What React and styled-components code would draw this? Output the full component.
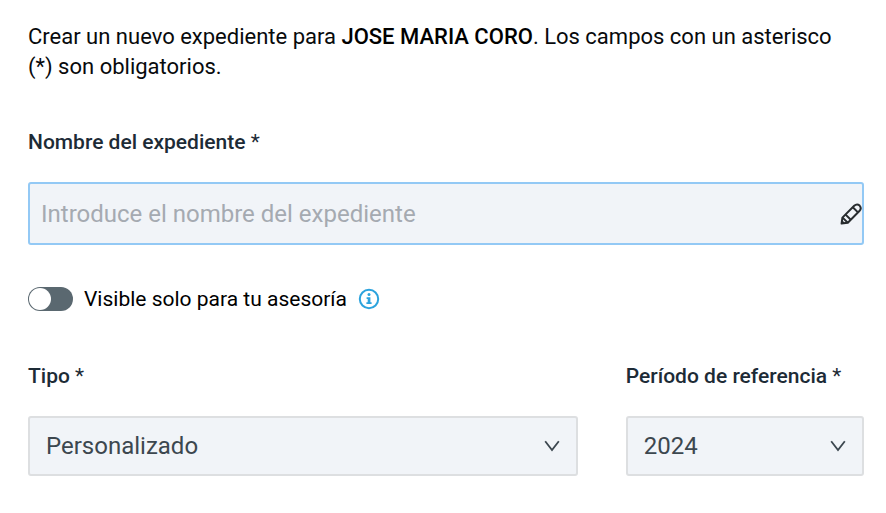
import React, { useState } from "react";
import styled, { createGlobalStyle } from "styled-components";

const App = () => {
  const [name, setName] = useState("");
  const [isPrivate, setIsPrivate] = useState(false);
  const [type, setType] = useState("Personalizado");
  const [period, setPeriod] = useState("2024");

  return (
    <>
      <GlobalStyle />
      <Form onSubmit={(e) => e.preventDefault()}>
        <Intro>
          Crear un nuevo expediente para <strong>JOSE MARIA CORO</strong>. Los
          campos con un asterisco (*) son obligatorios.
        </Intro>
        <Field>
          <Label htmlFor="name">
            Nombre del expediente <span>*</span>
          </Label>
          <InputBox>
            <input
              type="text"
              id="name"
              name="name"
              placeholder="Introduce el nombre del expediente"
              value={name}
              onChange={(e) => setName(e.target.value)}
            />
            <PencilIcon />
          </InputBox>
        </Field>
        <ToggleRow>
          <Toggle
            type="checkbox"
            role="switch"
            id="private"
            name="private"
            checked={isPrivate}
            onChange={(e) => setIsPrivate(e.target.checked)}
          />
          <label htmlFor="private">Visible solo para tu asesoría</label>
          <InfoIcon />
        </ToggleRow>
        <Columns>
          <Field>
            <Label htmlFor="type">
              Tipo <span>*</span>
            </Label>
            <SelectBox>
              <select
                id="type"
                name="type"
                value={type}
                onChange={(e) => setType(e.target.value)}
              >
                <option>Personalizado</option>
              </select>
              <ChevronIcon />
            </SelectBox>
          </Field>
          <Field>
            <Label htmlFor="period">
              Período de referencia <span>*</span>
            </Label>
            <SelectBox>
              <select
                id="period"
                name="period"
                value={period}
                onChange={(e) => setPeriod(e.target.value)}
              >
                <option>2024</option>
              </select>
              <ChevronIcon />
            </SelectBox>
          </Field>
        </Columns>
      </Form>
    </>
  );
};

const PencilIcon = () => (
  <svg width="22" height="24" viewBox="0 0 22 24" fill="none" aria-hidden="true">
    <g stroke="#282c2f" strokeWidth="2" strokeLinejoin="round">
      <path d="M1.6 21.6 2.4 15.6 14.2 3.8Q17 1.2 19.6 3.6 22 6.4 19.4 9L7.8 20.8Z" />
      <path d="M12.8 5.2 18 10.4M2.6 15.6 7.8 20.8M5.6 12.6 10.8 17.8" />
    </g>
    <path d="M1.4 22 2 18 5.4 21.4Z" fill="#282c2f" />
  </svg>
);

const InfoIcon = () => (
  <svg width="22" height="22" viewBox="0 0 22 22" fill="none" aria-hidden="true">
    <circle cx="11" cy="11" r="9.2" stroke="#2ca3dd" strokeWidth="2" />
    <circle cx="11" cy="6.5" r="1.5" fill="#2ca3dd" />
    <path d="M8.6 9.2H12.4V14.3H13.6V16H8.4V14.3H9.7V10.9H8.6Z" fill="#2ca3dd" />
  </svg>
);

const ChevronIcon = () => (
  <svg width="16" height="12" viewBox="0 0 16 12" fill="none" aria-hidden="true">
    <path d="M1.2 1.2 8 10 14.8 1.2" stroke="#3c474f" strokeWidth="1.8" />
  </svg>
);

const GlobalStyle = createGlobalStyle`
  * {
    box-sizing: border-box;
  }
  body {
    margin: 0;
    background: #fff;
    color: #080a0c;
    font-family: Roboto, "Liberation Sans", sans-serif;
    font-size: 21px;
  }
`;
const Form = styled.form`
  padding: 22px 22px 36px 28px;
`;
const Intro = styled.p`
  margin: 0 0 45px;
  padding-right: 16px;
  font-size: 22px;
  line-height: 30px;
  strong {
    font-weight: 500;
    color: #000;
  }
`;
const Field = styled.div`
  display: flex;
  flex-direction: column;
  gap: 25px;
`;
const Label = styled.label`
  font-weight: 500;
  line-height: 30px;
  color: #1d2b36;
  span {
    font-weight: 400;
  }
`;
const InputBox = styled.div`
  display: flex;
  align-items: center;
  height: 63px;
  background: #f1f4f8;
  border: 2px solid #93c9f5;
  border-radius: 3px;
  input {
    flex: 1;
    min-width: 0;
    height: 100%;
    padding: 0 11px;
    border: none;
    outline: none;
    background: transparent;
    color: #3c474f;
    font-family: inherit;
    font-size: 24px;
  }
  input::placeholder {
    color: #a5aab1;
    opacity: 1;
  }
`;
const ToggleRow = styled.div`
  display: flex;
  align-items: center;
  gap: 11px;
  margin: 39px 0 47px;
  line-height: 30px;
  color: #000;
`;
const Toggle = styled.input`
  appearance: none;
  display: flex;
  align-items: center;
  width: 45px;
  height: 24px;
  margin: 0;
  padding: 1px;
  border-radius: 12px;
  background: #5a6870;
  cursor: pointer;
  &::before {
    content: "";
    width: 22px;
    height: 22px;
    border-radius: 50%;
    background: #fff;
  }
  &:checked {
    justify-content: flex-end;
  }
`;
const Columns = styled.div`
  display: grid;
  grid-template-columns: 30fr 13fr;
  column-gap: 48px;
`;
const SelectBox = styled.div`
  display: grid;
  align-items: center;
  height: 60px;
  background: #f1f4f8;
  border: 2px solid #dddfe1;
  border-radius: 3px;
  select {
    grid-area: 1 / 1;
    width: 100%;
    height: 100%;
    padding: 0 48px 0 16px;
    appearance: none;
    border: none;
    background: transparent;
    color: #3c474f;
    font-family: inherit;
    font-size: 24px;
  }
  svg {
    grid-area: 1 / 1;
    justify-self: end;
    margin-right: 16px;
    pointer-events: none;
  }
`;
export default App;
